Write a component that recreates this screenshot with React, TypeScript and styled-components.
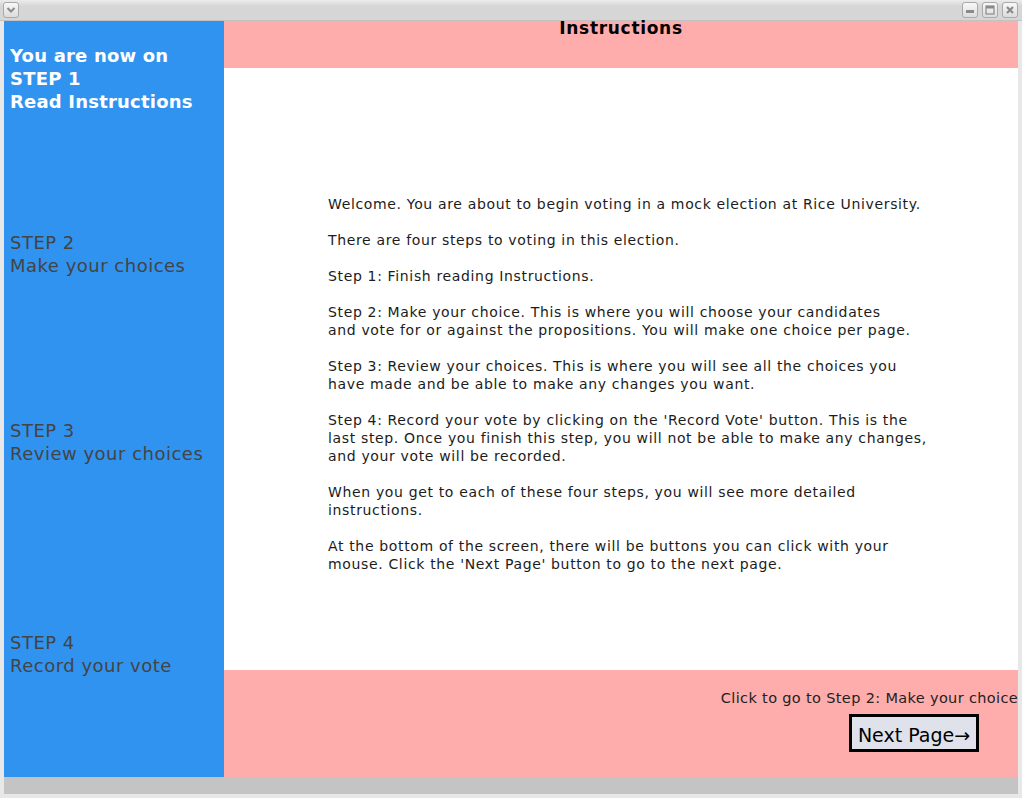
import styled, { createGlobalStyle } from "styled-components";

const GlobalStyle = createGlobalStyle`
  html, body {
    margin: 0;
    padding: 0;
    background: #e6e6e6;
  }
  * {
    box-sizing: border-box;
  }
`;

const Window = styled.div`
  width: 1022px;
  height: 798px;
  display: flex;
  flex-direction: column;
  background: #e8e8e8;
  font-family: "DejaVu Sans", "Liberation Sans", sans-serif;
  overflow: hidden;
`;

const TitleBar = styled.div`
  height: 21px;
  flex: none;
  display: flex;
  align-items: center;
  justify-content: space-between;
  padding: 0 4px 1px 3px;
  background: linear-gradient(#ececec, #d6d6d6 30%, #d6d6d6);
  border-bottom: 1px solid #c2c2c2;
`;

const TitleButtons = styled.div`
  display: flex;
  gap: 4px;
`;

const TitleButton = styled.div`
  width: 16px;
  height: 16px;
  border: 1px solid #a9a9a9;
  border-radius: 3px;
  background: linear-gradient(#f8f8f8, #dcdcdc);
  display: flex;
  align-items: center;
  justify-content: center;
`;

const Body = styled.div`
  flex: 1;
  display: flex;
  padding: 0 4px;
  min-height: 0;
`;

const Sidebar = styled.div`
  width: 220px;
  flex: none;
  background: #3193f0;
  display: flex;
  flex-direction: column;
  padding-left: 6px;
`;

const Step = styled.div<{ $gap: number; $current?: boolean }>`
  margin-top: ${(p) => p.$gap}px;
  font-size: 18px;
  line-height: 23px;
  font-weight: ${(p) => (p.$current ? 700 : 400)};
  letter-spacing: ${(p) => (p.$current ? "0.2px" : "0.5px")};
  color: ${(p) => (p.$current ? "#ffffff" : "#444444")};
  white-space: pre-line;
`;

const Main = styled.div`
  flex: 1;
  display: flex;
  flex-direction: column;
`;

const Header = styled.div`
  height: 47px;
  flex: none;
  background: #ffacac;
  text-align: center;
  font-size: 17px;
  line-height: 14px;
  font-weight: 700;
  letter-spacing: 0.7px;
  color: #000;
`;

const Content = styled.div`
  flex: 1;
  background: #ffffff;
  padding: 127px 0 0 104px;
`;

const Paragraph = styled.p`
  margin: 0 0 18px;
  font-size: 14px;
  line-height: 18px;
  letter-spacing: 0.65px;
  color: #1c1c1c;
  white-space: pre-line;
`;

const Footer = styled.div`
  height: 107px;
  flex: none;
  background: #ffacac;
  display: flex;
  flex-direction: column;
  align-items: flex-end;
  padding-top: 19px;
`;

const FooterNote = styled.div`
  font-size: 14.5px;
  line-height: 18px;
  letter-spacing: 0.35px;
  color: #222;
  margin-right: 0;
`;

const NextButton = styled.button`
  margin: 7px 39px 0 0;
  width: 130px;
  height: 38px;
  border: 3px solid #000;
  background: #dfe2ea;
  font-family: "DejaVu Sans", "Liberation Sans", sans-serif;
  font-size: 19px;
  color: #000;
  padding: 3px 0 0;
  border-radius: 0;
`;

const StatusBar = styled.div`
  height: 17px;
  flex: none;
  margin: 0 4px;
  background: #c4c4c4;
`;

const BottomEdge = styled.div`
  height: 4px;
  flex: none;
`;

const paragraphs = [
  "Welcome. You are about to begin voting in a mock election at Rice University.",
  "There are four steps to voting in this election.",
  "Step 1: Finish reading Instructions.",
  "Step 2: Make your choice. This is where you will choose your candidates\nand vote for or against the propositions. You will make one choice per page.",
  "Step 3: Review your choices. This is where you will see all the choices you\nhave made and be able to make any changes you want.",
  "Step 4: Record your vote by clicking on the 'Record Vote' button. This is the\nlast step. Once you finish this step, you will not be able to make any changes,\nand your vote will be recorded.",
  "When you get to each of these four steps, you will see more detailed\ninstructions.",
  "At the bottom of the screen, there will be buttons you can click with your\nmouse. Click the 'Next Page' button to go to the next page.",
];

const steps = [
  { gap: 23, text: "You are now on\nSTEP 1\nRead Instructions", current: true },
  { gap: 118, text: "STEP 2\nMake your choices" },
  { gap: 142, text: "STEP 3\nReview your choices" },
  { gap: 166, text: "STEP 4\nRecord your vote" },
];

function App() {
  return (
    <>
      <GlobalStyle />
      <Window>
        <TitleBar>
          <TitleButton>
            <svg width="10" height="8" viewBox="0 0 10 8">
              <path d="M1.5 2 L5 5.5 L8.5 2" fill="none" stroke="#8a8a8a" strokeWidth="2" />
            </svg>
          </TitleButton>
          <TitleButtons>
            <TitleButton>
              <svg width="10" height="10" viewBox="0 0 10 10">
                <rect x="1" y="5" width="8" height="3" fill="#8a8a8a" />
              </svg>
            </TitleButton>
            <TitleButton>
              <svg width="10" height="10" viewBox="0 0 10 10">
                <rect x="1" y="1" width="8" height="8" fill="none" stroke="#8a8a8a" strokeWidth="1.2" />
                <rect x="1" y="1" width="8" height="2.5" fill="#8a8a8a" />
              </svg>
            </TitleButton>
            <TitleButton>
              <svg width="10" height="10" viewBox="0 0 10 10">
                <path d="M2 2 L8 8 M8 2 L2 8" stroke="#8a8a8a" strokeWidth="2.2" />
              </svg>
            </TitleButton>
          </TitleButtons>
        </TitleBar>
        <Body>
          <Sidebar>
            {steps.map((s) => (
              <Step key={s.text} $gap={s.gap} $current={s.current}>
                {s.text}
              </Step>
            ))}
          </Sidebar>
          <Main>
            <Header>Instructions</Header>
            <Content>
              {paragraphs.map((p) => (
                <Paragraph key={p}>{p}</Paragraph>
              ))}
            </Content>
            <Footer>
              <FooterNote>Click to go to Step 2: Make your choice</FooterNote>
              <NextButton>Next Page→</NextButton>
            </Footer>
          </Main>
        </Body>
        <StatusBar />
        <BottomEdge />
      </Window>
    </>
  );
}

export default App;
